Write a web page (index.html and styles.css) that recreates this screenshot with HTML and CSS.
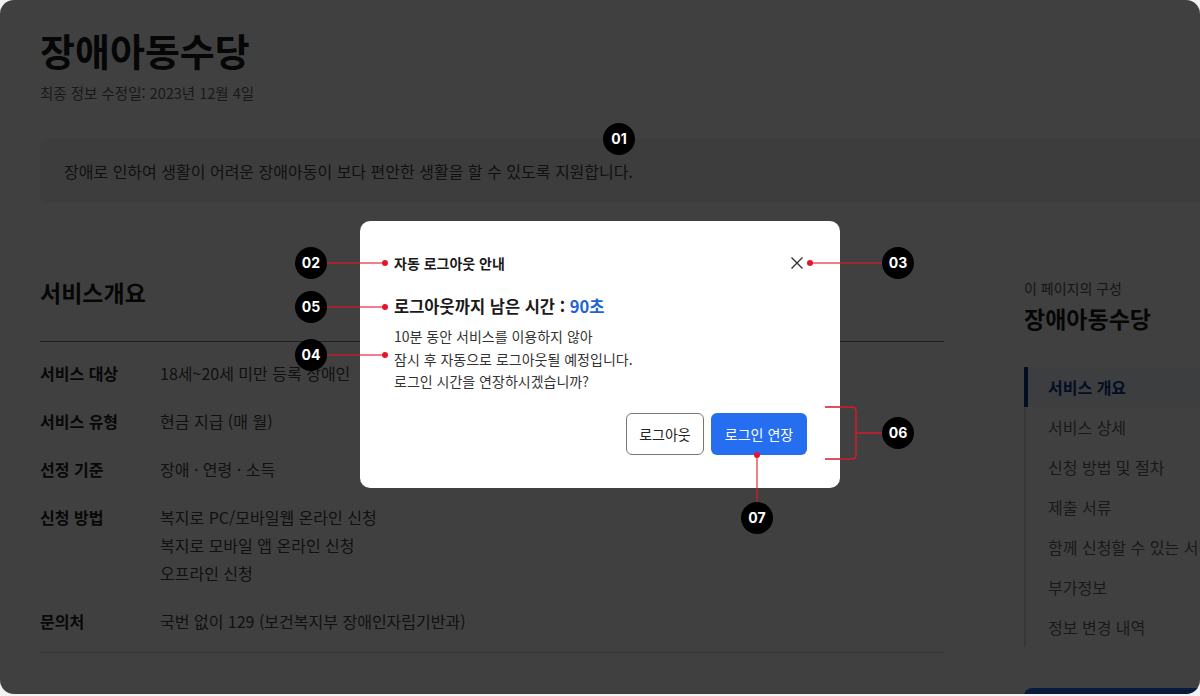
FILE: index.html
```html
<!DOCTYPE html>
<html lang="ko">
<head>
<meta charset="utf-8">
<title>장애아동수당</title>
<link rel="stylesheet" href="styles.css">
</head>
<body>
<div class="frame">
  <div class="page">
    <header class="head">
      <h1 class="title">장애아동수당</h1>
      <p class="updated">최종 정보 수정일: 2023년 12월 4일</p>
      <div class="summary">장애로 인하여 생활이 어려운 장애아동이 보다 편안한 생활을 할 수 있도록 지원합니다.</div>
    </header>
    <div class="content">
      <main class="main">
        <h2 class="section-title">서비스개요</h2>
        <dl class="overview">
          <div class="row"><dt>서비스 대상</dt><dd>18세~20세 미만 등록 장애인</dd></div>
          <div class="row"><dt>서비스 유형</dt><dd>현금 지급 (매 월)</dd></div>
          <div class="row"><dt>선정 기준</dt><dd>장애 · 연령 · 소득</dd></div>
          <div class="row"><dt>신청 방법</dt><dd><span>복지로 PC/모바일웹 온라인 신청</span><span>복지로 모바일 앱 온라인 신청</span><span>오프라인 신청</span></dd></div>
          <div class="row"><dt>문의처</dt><dd>국번 없이 129 (보건복지부 장애인자립기반과)</dd></div>
        </dl>
      </main>
      <aside class="toc">
        <p class="toc-caption">이 페이지의 구성</p>
        <p class="toc-title">장애아동수당</p>
        <ul class="toc-list">
          <li class="toc-item active">서비스 개요</li>
          <li class="toc-item">서비스 상세</li>
          <li class="toc-item">신청 방법 및 절차</li>
          <li class="toc-item">제출 서류</li>
          <li class="toc-item">함께 신청할 수 있는 서비스</li>
          <li class="toc-item">부가정보</li>
          <li class="toc-item">정보 변경 내역</li>
        </ul>
        <div class="toc-cta"></div>
      </aside>
    </div>
  </div>

  <div class="dim"></div>

  <div class="modal" role="dialog">
    <div class="modal-head">
      <p class="modal-title">자동 로그아웃 안내</p>
      <button class="modal-close" aria-label="닫기">
        <svg width="12" height="12" viewBox="0 0 12 12"><path d="M0.5 0.5 L11.5 11.5 M11.5 0.5 L0.5 11.5" stroke="#333" stroke-width="1.4" fill="none"/></svg>
      </button>
    </div>
    <p class="modal-time">로그아웃까지 남은 시간 : <em>90초</em></p>
    <p class="modal-text">10분 동안 서비스를 이용하지 않아<br>잠시 후 자동으로 로그아웃될 예정입니다.<br>로그인 시간을 연장하시겠습니까?</p>
    <div class="modal-actions">
      <button class="btn btn-outline">로그아웃</button>
      <button class="btn btn-primary">로그인 연장</button>
    </div>
  </div>

  <svg class="marks" width="1200" height="694" viewBox="0 0 1200 694">
    <g class="lead">
      <path d="M327 263 H385"/>
      <path d="M327 307 H385"/>
      <path d="M327 355 H385"/>
      <path d="M810 263 H882"/>
      <path d="M757 455 V502"/>
    </g>
    <path class="bracket" d="M825 407 H852 Q856 407 856 411 V455 Q856 459 852 459 H825 M856 433 H882"/>
    <g class="dots">
      <circle cx="385" cy="263" r="3"/>
      <circle cx="385" cy="307" r="3"/>
      <circle cx="385" cy="355" r="3"/>
      <circle cx="810" cy="263" r="3"/>
      <circle cx="757" cy="455" r="3"/>
    </g>
  </svg>

  <span class="badge b01">01</span>
  <span class="badge b02">02</span>
  <span class="badge b03">03</span>
  <span class="badge b04">04</span>
  <span class="badge b05">05</span>
  <span class="badge b06">06</span>
  <span class="badge b07">07</span>
</div>
</body>
</html>
```

FILE: styles.css
```css
* {
  box-sizing: border-box;
  margin: 0;
  padding: 0;
}

body {
  width: 1200px;
  height: 696px;
  overflow: hidden;
  background: #f2f2f2;
  font-family: "Noto Sans CJK KR", "Noto Sans", sans-serif;
}

.frame {
  position: relative;
  width: 1200px;
  height: 694px;
  border-radius: 14px;
  overflow: hidden;
  background: #fff;
}

.page {
  width: 1264px;
  padding: 25px 0 0 40px;
}

.title {
  font-size: 38px;
  line-height: 50px;
  font-weight: 700;
  color: #1a1a1a;
}

.updated {
  margin-top: 8px;
  font-size: 14.5px;
  line-height: 20px;
  color: #666;
}

.summary {
  margin-top: 36px;
  background: #f1f3f7;
  border-radius: 8px;
  padding: 20px 24px;
  font-size: 16px;
  line-height: 24px;
  color: #444;
}

.content {
  display: flex;
  gap: 80px;
  margin-top: 73px;
}

.main {
  width: 904px;
  flex: none;
}

.section-title {
  font-size: 23px;
  line-height: 32px;
  font-weight: 700;
  color: #1a1a1a;
}

.overview {
  margin-top: 33px;
  border-top: 1px solid #777;
  border-bottom: 1px solid #d0d0d0;
  padding: 17px 0;
  display: flex;
  flex-direction: column;
  gap: 20px;
}

.row {
  display: flex;
  font-size: 16px;
  line-height: 28px;
}

.row dt {
  width: 120px;
  flex: none;
  font-weight: 700;
  color: #222;
}

.row dd {
  display: flex;
  flex-direction: column;
  color: #444;
}

.toc {
  width: 240px;
  flex: none;
  padding-top: 2px;
}

.toc-caption {
  font-size: 14px;
  line-height: 20px;
  color: #555;
}

.toc-title {
  margin-top: 5px;
  font-size: 23px;
  line-height: 30px;
  font-weight: 700;
  color: #1a1a1a;
}

.toc-list {
  margin-top: 34px;
  list-style: none;
  border-left: 2px solid #d3d9e2;
}

.toc-item {
  height: 40px;
  line-height: 40px;
  padding-left: 22px;
  font-size: 16px;
  color: #666;
  white-space: nowrap;
}

.toc-item.active {
  margin-left: -2px;
  border-left: 4px solid #0f3b8c;
  padding-left: 20px;
  background: #f4f6fa;
  color: #0f3b8c;
  font-weight: 700;
}

.toc-cta {
  margin-top: 41px;
  height: 56px;
  border-radius: 8px;
  background: #256ef0;
}

.dim {
  position: absolute;
  inset: 0;
  background: rgba(0, 0, 0, 0.75);
}

.modal {
  position: absolute;
  left: 360px;
  top: 221px;
  width: 480px;
  background: #fff;
  border-radius: 10px;
  padding: 32px 33px 33px 34px;
}

.modal-head {
  display: flex;
  justify-content: space-between;
  align-items: center;
  height: 20px;
}

.modal-title {
  font-size: 14px;
  line-height: 20px;
  font-weight: 700;
  color: #1a1a1a;
}

.modal-close {
  width: 20px;
  height: 20px;
  border: none;
  background: none;
  display: flex;
  align-items: center;
  justify-content: center;
}

.modal-time {
  margin-top: 21px;
  font-size: 16.5px;
  line-height: 24px;
  font-weight: 700;
  color: #1a1a1a;
}

.modal-time em {
  font-style: normal;
  color: #1f63d8;
}

.modal-text {
  margin-top: 7px;
  font-size: 14px;
  line-height: 22.5px;
  color: #333;
}

.modal-actions {
  margin-top: 20px;
  display: flex;
  justify-content: flex-end;
  gap: 7px;
}

.btn {
  height: 42px;
  border-radius: 6px;
  font-family: inherit;
  font-size: 14px;
}

.btn-outline {
  width: 78px;
  border: 1px solid #767676;
  background: #fff;
  color: #222;
}

.btn-primary {
  width: 96px;
  border: none;
  background: #256ef0;
  color: #fff;
}

.marks {
  position: absolute;
  left: 0;
  top: 0;
  pointer-events: none;
}

.lead path {
  stroke: rgba(230, 20, 40, 0.55);
  stroke-width: 2;
  fill: none;
}

.bracket {
  stroke: #d4192e;
  stroke-width: 1.5;
  fill: none;
}

.dots circle {
  fill: #e5162b;
}

.badge {
  position: absolute;
  width: 32px;
  height: 32px;
  margin: -16px 0 0 -16px;
  border-radius: 50%;
  background: #000;
  color: #fff;
  font-family: Inter, "Noto Sans", sans-serif;
  font-weight: 700;
  font-size: 14px;
  line-height: 32px;
  text-align: center;
}

.b01 { left: 619px; top: 139px; }
.b02 { left: 311px; top: 263px; }
.b03 { left: 898px; top: 263px; }
.b04 { left: 311px; top: 355px; }
.b05 { left: 311px; top: 307px; }
.b06 { left: 898px; top: 433px; }
.b07 { left: 757px; top: 518px; }
```
